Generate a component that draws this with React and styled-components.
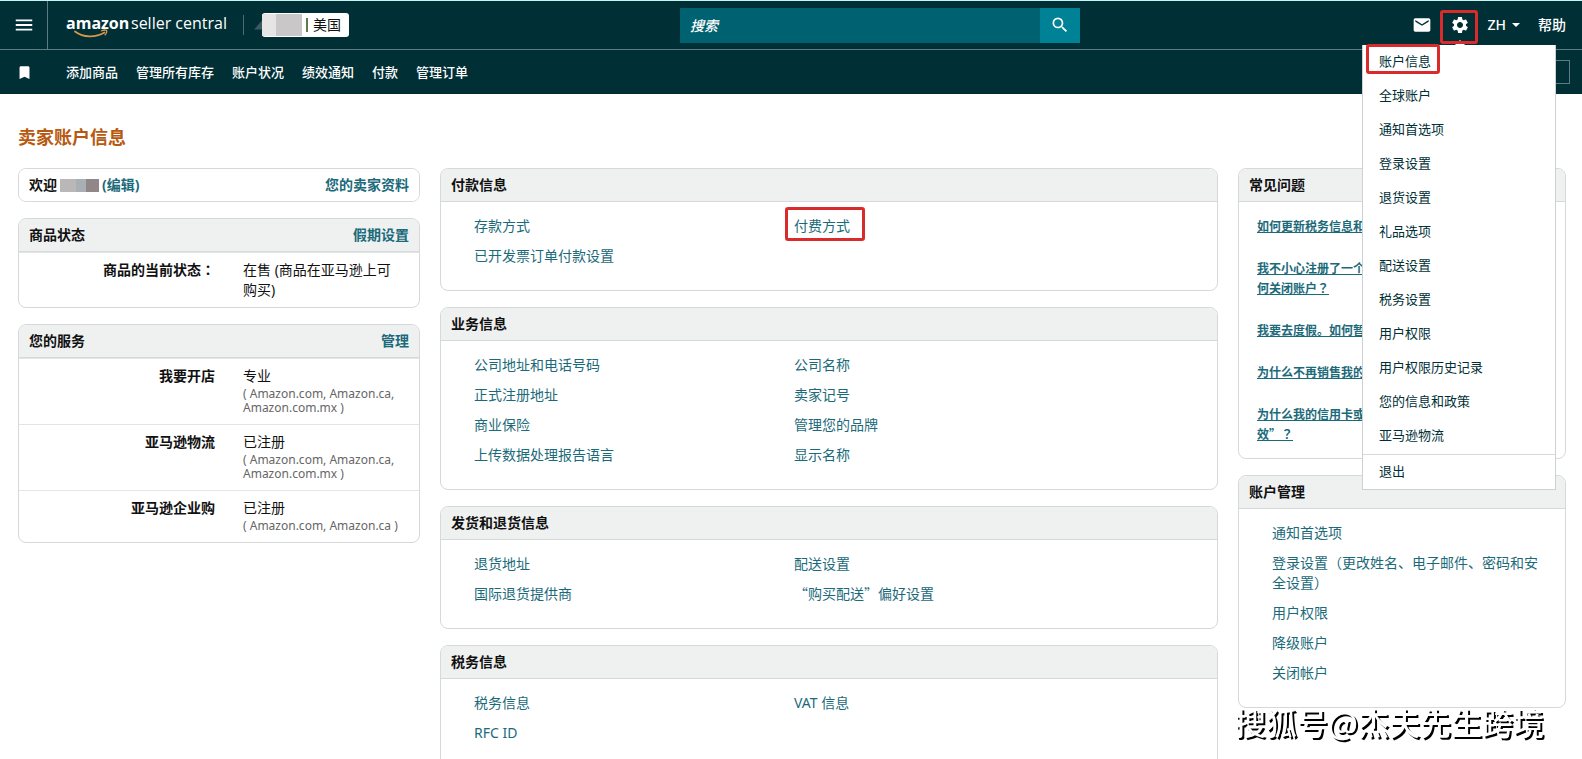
import React from 'react';
import styled, { createGlobalStyle, css } from 'styled-components';
import { MdSearch, MdEmail, MdSettings, MdBookmark, MdMenu } from 'react-icons/md';

const GlobalStyle = createGlobalStyle`
  * {
    box-sizing: border-box;
  }
  body {
    margin: 0;
    background: #fff;
    color: #111;
    font-family: "Noto Sans", "Noto Sans CJK SC", sans-serif;
    font-size: 14px;
    line-height: 20px;
    overflow: hidden;
  }
  a {
    color: inherit;
    text-decoration: none;
  }
  ul {
    list-style: none;
    margin: 0;
    padding: 0;
  }
  button {
    font: inherit;
    color: inherit;
    background: none;
    border: 0;
    padding: 0;
    cursor: pointer;
  }
`;

const marked = css`
  position: relative;
  &::after {
    content: '';
    position: absolute;
    inset: ${(p) => p.$inset};
    border: 3px solid #d92b2b;
    border-radius: 3px;
    pointer-events: none;
    z-index: 3;
  }
`;

const Header = styled.header`
  position: relative;
  background: #002f36;
  color: #fff;
  border-top: 1px solid #c9f3f1;
`;

const TopBar = styled.div`
  display: grid;
  grid-template-columns: 680fr 400px 502fr;
  align-items: center;
  height: 49px;
  border-bottom: 1px solid #5d7c80;
`;

const TopLeft = styled.div`
  display: flex;
  align-items: center;
  height: 48px;
`;

const MenuButton = styled.button`
  display: flex;
  align-items: center;
  justify-content: center;
  width: 48px;
  height: 48px;
  border-right: 1px solid #5d7c80;
`;

const Logo = styled.a`
  display: flex;
  margin-left: 17px;
`;

const Account = styled.div`
  display: flex;
  align-items: center;
  margin-left: 14px;
  padding-left: 10px;
  border-left: 1px solid #4b6c70;
  height: 20px;
`;

const Wedge = styled.span`
  width: 8px;
  height: 9px;
  background: #3b5a5f;
  clip-path: polygon(100% 0, 100% 100%, 0 100%);
`;

const Store = styled.button`
  display: flex;
  align-items: center;
  height: 24px;
  padding-right: 8px;
  background: #fff;
  color: #111;
  border-radius: 3px;
  overflow: hidden;
`;

const Mosaic = styled.span`
  display: inline-block;
  width: ${(p) => p.$w}px;
  height: ${(p) => p.$h}px;
  background: ${(p) => p.$colors};
`;

const StoreDivider = styled.span`
  width: 2px;
  height: 14px;
  margin: 0 5px 0 4px;
  background: #5f7a4c;
`;

const Search = styled.form`
  display: flex;
  height: 35px;
`;

const SearchInput = styled.input`
  flex: 1;
  min-width: 0;
  padding: 0 10px;
  border: 0;
  background: #006170;
  color: #fff;
  font: italic 500 14px "Noto Sans", "Noto Sans CJK SC", sans-serif;
  &::placeholder {
    color: #fff;
    opacity: 1;
  }
`;

const SearchButton = styled.button`
  display: flex;
  align-items: center;
  justify-content: center;
  width: 40px;
  background: #008296;
`;

const TopRight = styled.div`
  display: flex;
  align-items: center;
  justify-content: flex-end;
  padding-right: 16px;
  font-weight: 500;
`;

const IconButton = styled.button`
  display: flex;
  margin-right: ${(p) => p.$gap}px;
  ${(p) => p.$inset && marked}
`;

const Language = styled.button`
  display: flex;
  align-items: center;
  gap: 6px;
  margin-right: 18px;
`;

const Caret = styled.span`
  border: 4px solid transparent;
  border-top-color: #fff;
  border-bottom: 0;
`;

const NavBar = styled.nav`
  display: flex;
  align-items: center;
  height: 44px;
  padding: 0 12px 0 16px;
  font-size: 13px;
  font-weight: 500;
`;

const Shortcuts = styled.ul`
  display: flex;
  gap: 18px;
  margin-left: 33px;
`;

const EditButton = styled.button`
  width: 80px;
  height: 24px;
  margin-left: auto;
  border: 1px solid #5d7c80;
`;

const Dropdown = styled.div`
  position: absolute;
  top: 44px;
  right: 26px;
  width: 194px;
  background: #fff;
  color: #002f36;
  border: 1px solid #ccd2d2;
  border-top: 0;
  font-size: 13px;
  z-index: 2;
  &::before {
    content: '';
    position: absolute;
    top: -5px;
    left: 92px;
    border: 5px solid transparent;
    border-top: 0;
    border-bottom-color: #fff;
  }
`;

const DropdownItem = styled.li`
  padding: 6px 16px 8px;
`;

const Logout = styled(DropdownItem)`
  margin-top: 1px;
  border-top: 1px solid #d5d9d9;
`;

const ItemLink = styled.a`
  display: inline-block;
  vertical-align: top;
  ${(p) => p.$inset && marked}
`;

const Main = styled.main`
  padding: 32px 16px 0 18px;
`;

const Title = styled.h1`
  margin: 0 0 20px;
  color: #b7590f;
  font-size: 18px;
  line-height: 22px;
`;

const Columns = styled.div`
  display: grid;
  grid-template-columns: 402fr 778fr 328fr;
  gap: 20px;
  align-items: start;
`;

const Column = styled.div`
  display: flex;
  flex-direction: column;
  gap: 16px;
`;

const PanelBox = styled.section`
  border: 1px solid #d5d9d9;
  border-radius: 8px;
  overflow: hidden;
`;

const PanelHead = styled.div`
  display: flex;
  align-items: center;
  justify-content: space-between;
  height: ${(p) => (p.$plain ? 32 : 33)}px;
  padding: 0 10px;
  background: ${(p) => (p.$plain ? '#fff' : '#eff1f1')};
  border-bottom: ${(p) => (p.$plain ? '0' : '1px solid #d5d9d9')};
  font-weight: 700;
  h2 {
    display: flex;
    align-items: center;
    gap: 3px;
    margin: 0;
    font-size: 14px;
  }
`;

const HeadLink = styled.a`
  color: #1b6a7a;
  font-weight: 700;
`;

const InfoList = styled.dl`
  margin: 0;
`;

const InfoRow = styled.div`
  display: grid;
  grid-template-columns: 196fr 176fr;
  column-gap: 28px;
  padding: 7px 0;
  border-top: 1px solid #e3e6e6;
  dt {
    text-align: right;
    font-weight: 700;
  }
  dd {
    margin: 0;
    padding-right: 17px;
  }
`;

// full-width punctuation centred in its cell
const Punct = styled.span`
  font-family: "Noto Sans CJK TC", sans-serif;
  line-height: 1;
`;

const Quote = styled.span`
  font-family: "Noto Sans CJK SC", sans-serif;
  line-height: 1;
`;

const Small = styled.small`
  display: block;
  margin: 1px 0 2px;
  color: #666;
  font-size: 12px;
  line-height: 14px;
`;

const LinkGrid = styled.ul`
  display: grid;
  grid-template-columns: ${(p) => (p.$single ? '1fr' : '320fr 407fr')};
  row-gap: 10px;
  padding: 14px 16px 24px 33px;
  color: #1b6a7a;
`;

const FaqList = styled.ul`
  display: grid;
  row-gap: 22px;
  padding: 15px 18px 13px;
  color: #1b6a7a;
  font-size: 12px;
  font-weight: 700;
  a {
    text-decoration: underline;
  }
`;

const Watermark = styled.div`
  position: fixed;
  right: 38px;
  bottom: 14px;
  color: #fff;
  font-family: "Noto Sans CJK SC", sans-serif;
  font-size: 31px;
  line-height: 46px;
  font-weight: 500;
  text-shadow: 2px 2px 0 #000;
`;

const menuItems = [
  '账户信息', '全球账户', '通知首选项', '登录设置', '退货设置', '礼品选项',
  '配送设置', '税务设置', '用户权限', '用户权限历史记录', '您的信息和政策', '亚马逊物流',
];

const shortcuts = ['添加商品', '管理所有库存', '账户状况', '绩效通知', '付款', '管理订单'];

const services = [
  ['我要开店', '专业', '( Amazon.com, Amazon.ca, Amazon.com.mx )'],
  ['亚马逊物流', '已注册', '( Amazon.com, Amazon.ca, Amazon.com.mx )'],
  ['亚马逊企业购', '已注册', '( Amazon.com, Amazon.ca )'],
];

const sections = [
  { title: '付款信息', links: ['存款方式', '付费方式', '已开发票订单付款设置'] },
  {
    title: '业务信息',
    links: [
      '公司地址和电话号码', '公司名称', '正式注册地址', '卖家记号',
      '商业保险', '管理您的品牌', '上传数据处理报告语言', '显示名称',
    ],
  },
  {
    title: '发货和退货信息',
    links: ['退货地址', '配送设置', '国际退货提供商', <><Quote>“</Quote>购买配送<Quote>”</Quote>偏好设置</>],
  },
  { title: '税务信息', links: ['税务信息', 'VAT 信息', 'RFC ID'] },
];

const faqs = [
  ['如何更新税务信息和'],
  ['我不小心注册了一个', <>何关闭账户<Punct>？</Punct></>],
  ['我要去度假。如何暂'],
  ['为什么不再销售我的'],
  ['为什么我的信用卡或', <>效<Quote>”</Quote><Punct>？</Punct></>],
];

const accountLinks = [
  '通知首选项',
  <>登录设置<Punct>（</Punct>更改姓名、电子邮件、密码和安全设置<Punct>）</Punct></>,
  '用户权限',
  '降级账户',
  '关闭帐户',
];

const SellerLogo = () => (
  <svg width="164" height="30" viewBox="0 0 164 30" fill="#fff" role="img" aria-label="amazon seller central">
    <g fontFamily="'Open Sans', sans-serif">
      <text x="1" y="19" fontSize="16" fontWeight="700">amazon</text>
      <text x="66" y="19" fontSize="16">seller central</text>
    </g>
    <path d="M10 21.5c8.5 6.2 20 6.5 29.500 1" fill="none" stroke="#d9974a" strokeWidth="1.800" strokeLinecap="round" />
    <path d="M36 21c2-.8 4.500-1.200 5.500-.7.600 1-.4 3.500-1.800 5" fill="none" stroke="#d9974a" strokeWidth="1.300" />
  </svg>
);

const Panel = ({ title, action, plain, children }) => (
  <PanelBox>
    <PanelHead $plain={plain}>
      <h2>{title}</h2>
      {action && <HeadLink href="#">{action}</HeadLink>}
    </PanelHead>
    {children}
  </PanelBox>
);

const App = () => {
  return (
    <>
      <GlobalStyle />
      <Header>
        <TopBar>
          <TopLeft>
            <MenuButton aria-label="菜单"><MdMenu size={22} /></MenuButton>
            <Logo href="#"><SellerLogo /></Logo>
            <Account>
              <Wedge />
              <Store>
                <Mosaic $w={40} $h={22} $colors="linear-gradient(90deg, #e6e4e4 35%, #c9c7c8 35%)" />
                <StoreDivider />
                美国
              </Store>
            </Account>
          </TopLeft>
          <Search>
            <SearchInput type="search" placeholder="搜索" aria-label="搜索" />
            <SearchButton type="button" aria-label="搜索"><MdSearch size={20} /></SearchButton>
          </Search>
          <TopRight>
            <IconButton $gap={18} aria-label="邮件"><MdEmail size={20} /></IconButton>
            <IconButton $gap={17} $inset="-5px -8px -9px -10px" aria-label="设置"><MdSettings size={20} /></IconButton>
            <Language>ZH <Caret /></Language>
            <a href="#">帮助</a>
          </TopRight>
        </TopBar>
        <NavBar>
          <MdBookmark size={17} />
          <Shortcuts>
            {shortcuts.map((name) => <li key={name}><a href="#">{name}</a></li>)}
          </Shortcuts>
          <EditButton aria-label="编辑" />
        </NavBar>
        <Dropdown>
          <ul>
            {menuItems.map((name, i) => (
              <DropdownItem key={name}>
                <ItemLink href="#" $inset={i === 0 && '-7px -9px -3px -13px'}>{name}</ItemLink>
              </DropdownItem>
            ))}
            <Logout><ItemLink href="#">退出</ItemLink></Logout>
          </ul>
        </Dropdown>
      </Header>

      <Main>
        <Title>卖家账户信息</Title>
        <Columns>
          <Column>
            <Panel
              plain
              action="您的卖家资料"
              title={(
                <>
                  欢迎
                  <Mosaic $w={39} $h={13} $colors="linear-gradient(90deg, #b9b7b7 40%, #a9b0b3 40% 66%, #918789 66%)" />
                  <HeadLink href="#">(编辑)</HeadLink>
                </>
              )}
            />
            <Panel title="商品状态" action="假期设置">
              <InfoList>
                <InfoRow>
                  <dt>商品的当前状态<Punct>：</Punct></dt>
                  <dd>在售 (商品在亚马逊上可购买)</dd>
                </InfoRow>
              </InfoList>
            </Panel>
            <Panel title="您的服务" action="管理">
              <InfoList>
                {services.map(([name, status, sites]) => (
                  <InfoRow key={name}>
                    <dt>{name}</dt>
                    <dd>{status}<Small>{sites}</Small></dd>
                  </InfoRow>
                ))}
              </InfoList>
            </Panel>
          </Column>

          <Column>
            {sections.map(({ title, links }) => (
              <Panel key={title} title={title}>
                <LinkGrid>
                  {links.map((link, i) => (
                    <li key={i}>
                      <ItemLink href="#" $inset={link === '付费方式' && '-9px -15px -5px -9px'}>{link}</ItemLink>
                    </li>
                  ))}
                </LinkGrid>
              </Panel>
            ))}
          </Column>

          <Column>
            <Panel title="常见问题">
              <FaqList>
                {faqs.map(([first, second], i) => (
                  <li key={i}><a href="#">{first}{second && <><br />{second}</>}</a></li>
                ))}
              </FaqList>
            </Panel>
            <Panel title="账户管理">
              <LinkGrid $single>
                {accountLinks.map((name, i) => <li key={i}><ItemLink href="#">{name}</ItemLink></li>)}
              </LinkGrid>
            </Panel>
          </Column>
        </Columns>
      </Main>
      <Watermark>搜狐号@杰夫先生跨境</Watermark>
    </>
  );
};

export default App;
